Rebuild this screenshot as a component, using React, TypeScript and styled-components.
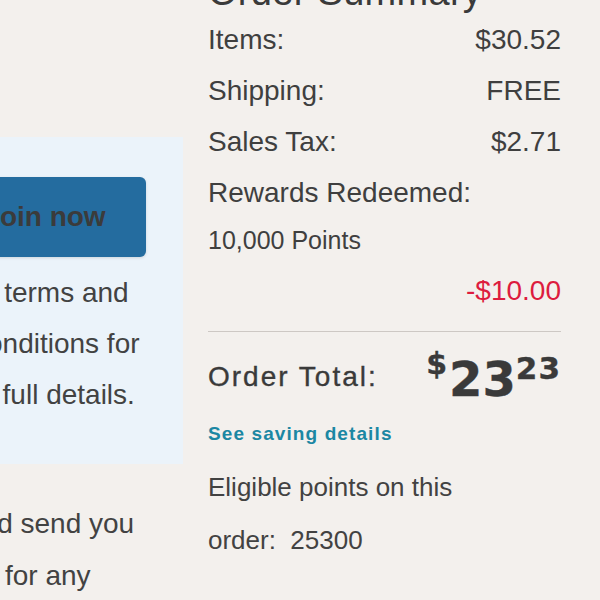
import React from 'react';
import styled, { createGlobalStyle } from 'styled-components';

const GlobalStyle = createGlobalStyle`
  html, body {
    margin: 0;
    padding: 0;
    background: #f3f0ed;
    overflow: hidden;
  }
  body {
    font-family: "Liberation Sans", Arial, sans-serif;
    color: #3f3f3f;
  }
`;

const Page = styled.div`
  display: flex;
  align-items: flex-start;
  width: 600px;
  height: 600px;
  overflow: hidden;
`;

const LeftColumn = styled.div`
  flex: 0 0 183px;
  width: 183px;
  padding-top: 137px;
`;

const PromoPanel = styled.section`
  margin-left: -80px;
  padding: 40px 37px 44px 24px;
  background: #ebf3fa;
`;

const JoinButton = styled.button`
  display: block;
  width: 100%;
  height: 80px;
  border: 0;
  border-radius: 6px;
  background: #246c9f;
  box-shadow: 0 1px 3px rgba(0, 0, 0, 0.12);
  color: #3b3b3b;
  font-family: "Liberation Sans", Arial, sans-serif;
  font-size: 28px;
  font-weight: 700;
  text-align: center;
  padding: 0;
`;

const Para = styled.p<{ $indent: number; $top: number }>`
  margin: ${({ $top }) => $top}px 0 0 ${({ $indent }) => $indent}px;
  font-size: 28px;
  line-height: ${({ $top }) => ($top > 20 ? 52 : 51)}px;
  white-space: nowrap;
  color: #424242;
`;

const RightColumn = styled.aside`
  flex: 0 0 353px;
  width: 353px;
  margin-left: 25px;
  margin-top: -30px;
`;

const Heading = styled.h2`
  margin: 0;
  font-size: 38px;
  line-height: 44px;
  font-weight: 400;
  letter-spacing: 0.3px;
  color: #3a3a3a;
  white-space: nowrap;
`;

const Row = styled.div`
  display: flex;
  justify-content: space-between;
  font-size: 28px;
  line-height: 51px;
  white-space: nowrap;
`;

const PointsLine = styled.div`
  font-size: 25px;
  line-height: 44px;
`;

const Discount = styled.div`
  text-align: right;
  font-size: 28px;
  line-height: 58px;
  color: #dd1c3e;
`;

const Divider = styled.hr`
  margin: 11px 0 0;
  border: 0;
  border-top: 1px solid #cdc8c4;
`;

const TotalRow = styled.div`
  display: flex;
  justify-content: space-between;
  align-items: flex-start;
  margin-top: 17px;
`;

const TotalLabel = styled.div`
  margin-top: 10px;
  font-size: 28px;
  line-height: 36px;
  letter-spacing: 2px;
  -webkit-text-stroke: 0.35px #3a3a3a;
  color: #3a3a3a;
`;

const Price = styled.div`
  display: flex;
  align-items: flex-start;
  font-family: "DejaVu Sans", "Liberation Sans", sans-serif;
  font-weight: 700;
  color: #3a3a3a;
  line-height: 1;
`;

const PricePart = styled.span<{ $size: number; $top: number }>`
  font-size: ${({ $size }) => $size}px;
  margin-top: ${({ $top }) => $top}px;
  margin-right: ${({ $size }) => ($size < 31 ? 2 : 0)}px;
  letter-spacing: ${({ $size }) => ($size === 31 ? 1 : 0)}px;
  -webkit-text-stroke: 0.4px #3a3a3a;
`;

const SavingLink = styled.a`
  display: block;
  margin-top: 19px;
  font-size: 19px;
  line-height: 24px;
  font-weight: 700;
  letter-spacing: 1.1px;
  color: #1b87a3;
  text-decoration: none;
`;

const PointsNote = styled.p`
  margin: 15px 0 0;
  font-size: 26px;
  line-height: 53px;
  color: #424242;
`;

const summary = [
  { label: 'Items:', value: '$30.52' },
  { label: 'Shipping:', value: 'FREE' },
  { label: 'Sales Tax:', value: '$2.71' },
];

export default function App() {
  return (
    <Page>
      <GlobalStyle />
      <LeftColumn>
        <PromoPanel>
          <JoinButton>Join now</JoinButton>
          <Para $indent={29} $top={10}>
            to terms and
            <br />
            conditions for
            <br />
            in full details.
          </Para>
        </PromoPanel>
        <Para $indent={-34} $top={34}>
          and send you
          <br />
          on for any
        </Para>
      </LeftColumn>
      <RightColumn>
        <Heading>Order Summary</Heading>
        {summary.map((r) => (
          <Row key={r.label}>
            <span>{r.label}</span>
            <span>{r.value}</span>
          </Row>
        ))}
        <Row>
          <span>Rewards Redeemed:</span>
        </Row>
        <PointsLine>10,000 Points</PointsLine>
        <Discount>-$10.00</Discount>
        <Divider />
        <TotalRow>
          <TotalLabel>Order Total:</TotalLabel>
          <Price>
            <PricePart $size={30} $top={0}>$</PricePart>
            <PricePart $size={48} $top={6}>23</PricePart>
            <PricePart $size={31} $top={4}>23</PricePart>
          </Price>
        </TotalRow>
        <SavingLink href="#">See saving details</SavingLink>
        <PointsNote>
          Eligible points on this
          <br />
          order:&nbsp;&nbsp;25300
        </PointsNote>
      </RightColumn>
    </Page>
  );
}
